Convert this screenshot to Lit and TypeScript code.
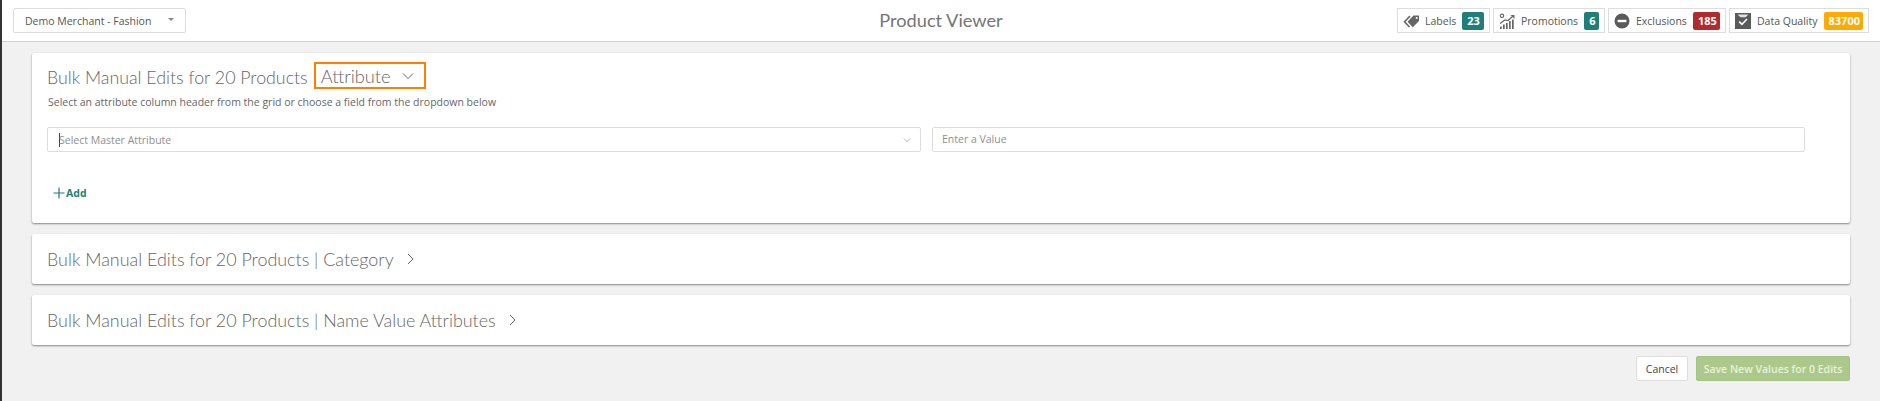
import { LitElement, html, css, svg } from "lit";
import { customElement } from "lit/decorators.js";

const tagIcon = svg`<path d="M7 3 L1.5 8.8 L6.5 14" stroke="#666" stroke-width="1.6" fill="none"/><path d="M4.5 8.8 L10.5 2.5 H16 V8 L9.8 14.2 Z" fill="#666"/><circle cx="13.6" cy="5" r="1" fill="#fff"/>`;
const chartIcon = svg`<g fill="#666"><rect x="1" y="13.5" width="1.7" height="2.5"/><rect x="4" y="11.5" width="1.7" height="4.5"/><rect x="7" y="10" width="1.7" height="6"/><rect x="10" y="8" width="1.7" height="8"/><rect x="13" y="6.5" width="1.7" height="9.5"/></g><path d="M1 10.5 L6 7 L9 7.5 L13.5 3.5" stroke="#666" stroke-width="1.2" fill="none"/><path d="M11.5 2 H15.5 V6 Z" fill="#666"/><circle cx="3" cy="2.8" r="1.7" fill="none" stroke="#666" stroke-width="1.1"/>`;
const minusIcon = svg`<circle cx="8" cy="8" r="7.5" fill="#5a5a5a"/><rect x="3.6" y="6.8" width="8.8" height="2.4" fill="#fff"/>`;
const checkIcon = svg`<rect x="0" y="0" width="16" height="16" fill="#5a5a5a"/><path d="M2.5 1.5 H13.5 L10.5 4.2 H5.5 Z" fill="#e4e4e4"/><path d="M4.2 8.6 L7 11.4 L12 6" stroke="#fff" stroke-width="1.6" fill="none"/>`;

@customElement("app-root")
export class AppRoot extends LitElement {
  static styles = css`
    :host { display: block; width: 1880px; height: 401px; overflow: hidden; font-family: "Open Sans", sans-serif; }
    .page { display: flex; height: 401px; background: #f1f1f1; }
    .strip { width: 2px; flex: none; background: #333; }
    .content { flex: 1; min-width: 0; display: flex; flex-direction: column; }
    header { height: 41px; box-sizing: content-box; background: #fff; border-bottom: 1px solid #cfcfcf; display: grid; grid-template-columns: 1fr auto 1fr; align-items: center; padding: 0 11px; flex: none; }
    .merchant { width: 173px; height: 25px; box-sizing: border-box; border: 1px solid #ddd; border-radius: 2px; display: flex; align-items: center; justify-content: space-between; padding: 0 11px; font-size: 10.5px; color: #555; }
    .caret { width: 0; height: 0; border-left: 3px solid transparent; border-right: 3px solid transparent; border-top: 3px solid #888; margin-bottom: 3px; }
    h1 { margin: 0 0 2px; font: 400 18.2px Lato, sans-serif; color: #757575; }
    .chips { display: flex; justify-content: flex-end; gap: 3px; }
    .chip { height: 25px; box-sizing: border-box; border: 1px solid #ddd; display: flex; align-items: center; padding: 0 5px 0 5px; font-size: 10.5px; color: #555; gap: 6px; }
    .chip svg { width: 16px; height: 16px; flex: none; }
    .chip .lbl { flex: 1; white-space: nowrap; }
    .badge { height: 18px; min-width: 15px; padding: 0 5px; box-sizing: border-box; border-radius: 2px; color: #fff; font-weight: 700; font-size: 11px; line-height: 18px; text-align: center; }
    .teal { background: #1f7f78; }
    .red { background: #b02a2e; }
    .amber { background: #ffaa00; }
    main { flex: 1; display: flex; flex-direction: column; gap: 11px; padding: 11px 30px 0 30px; }
    .card { background: #fff; border-radius: 2px; box-shadow: 0 1px 2px rgba(0,0,0,.45); }
    .card.closed { height: 50px; display: flex; align-items: center; gap: 10px; padding: 0 15px; }
    .card.closed .title { font-size: 17.9px; }
    .card.open { height: 170px; display: flex; flex-direction: column; padding: 0 16px; }
    .title { font: 300 17.8px Lato, sans-serif; color: #666; white-space: nowrap; }
    .head { display: flex; align-items: center; height: 27px; margin-top: 9px; margin-left: -1px; }
    .head .title { padding-top: 2px; }
    .attr { margin-left: 6px; width: 112px; height: 27px; box-sizing: border-box; border: 2px solid #ff8000; display: flex; align-items: center; padding-left: 5px; gap: 11px; }
    .head .attr { font-size: 18.3px; padding-top: 1px; }
    .sub { font-size: 10.5px; color: #666; line-height: 14px; margin-top: 6px; }
    .row { display: flex; gap: 11px; margin-top: 18px; margin-left: -1px; }
    .field { width: 874px; height: 25px; box-sizing: border-box; border: 1px solid #ddd; border-radius: 2px; display: flex; align-items: center; justify-content: space-between; padding: 0 9px 0 11px; font-size: 10.5px; color: #8f8f8f; }
    .cursor { width: 1px; height: 14px; background: #444; margin-right: -1px; flex: none; }
    .sel { display: flex; align-items: center; }
    .field.val { width: 873px; padding-left: 9px; padding-bottom: 1px; }
    .add { display: flex; align-items: center; gap: 1px; margin-top: 34px; margin-left: 5px; color: #1f7f78; font-size: 10.5px; font-weight: 700; }
    .add svg { width: 12px; height: 12px; }
    .foot { display: flex; justify-content: flex-end; gap: 8px; }
    .btn { height: 25px; box-sizing: border-box; border-radius: 2px; display: flex; align-items: center; justify-content: center; font-size: 10.5px; }
    .cancel { width: 52px; background: #fff; border: 1px solid #ddd; color: #444; }
    .save { width: 154px; background: #abc98a; color: #e9f1dd; font-weight: 600; border: 1px solid #a3c283; }
  `;

  chip(label: string, icon: unknown, n: string, c: string, w: number) {
    return html`<div class="chip" style="width:${w}px"><svg viewBox="0 0 16 16">${icon}</svg><span class="lbl">${label}</span><span class="badge ${c}">${n}</span></div>`;
  }

  chev(rot: boolean, size = 12, color = "#666") {
    return html`<svg width=${size} height=${size} viewBox="0 0 12 12" fill="none" stroke=${color} stroke-width="1">
      ${rot ? svg`<path d="M4 1 L9 6 L4 11"/>` : svg`<path d="M1 3.5 L6 8.5 L11 3.5"/>`}
    </svg>`;
  }

  render() {
    return html`<div class="page">
      <div class="strip"></div>
      <div class="content">
        <header>
          <div><div class="merchant"><span>Demo Merchant - Fashion</span><span class="caret"></span></div></div>
          <h1>Product Viewer</h1>
          <div class="chips">
            ${this.chip("Labels", tagIcon, "23", "teal", 93)}
            ${this.chip("Promotions", chartIcon, "6", "teal", 112)}
            ${this.chip("Exclusions", minusIcon, "185", "red", 118)}
            ${this.chip("Data Quality", checkIcon, "83700", "amber", 140)}
          </div>
        </header>
        <main>
          <section class="card open">
            <div class="head">
              <span class="title">Bulk Manual Edits for 20 Products</span>
              <span class="attr title">Attribute ${this.chev(false)}</span>
            </div>
            <div class="sub">Select an attribute column header from the grid or choose a field from the dropdown below</div>
            <div class="row">
              <div class="field"><span class="sel"><span class="cursor"></span>Select Master Attribute</span>${this.chev(false, 8, "#999")}</div>
              <div class="field val">Enter a Value</div>
            </div>
            <div class="add"><svg viewBox="0 0 12 12" fill="none" stroke="#1f7f78" stroke-width="1.2"><path d="M6 .5 V11.5 M.5 6 H11.5"/></svg>Add</div>
          </section>
          <section class="card closed"><span class="title">Bulk Manual Edits for 20 Products | Category</span>${this.chev(true)}</section>
          <section class="card closed"><span class="title">Bulk Manual Edits for 20 Products | Name Value Attributes</span>${this.chev(true)}</section>
          <div class="foot">
            <div class="btn cancel">Cancel</div>
            <div class="btn save">Save New Values for 0 Edits</div>
          </div>
        </main>
      </div>
    </div>`;
  }
}
